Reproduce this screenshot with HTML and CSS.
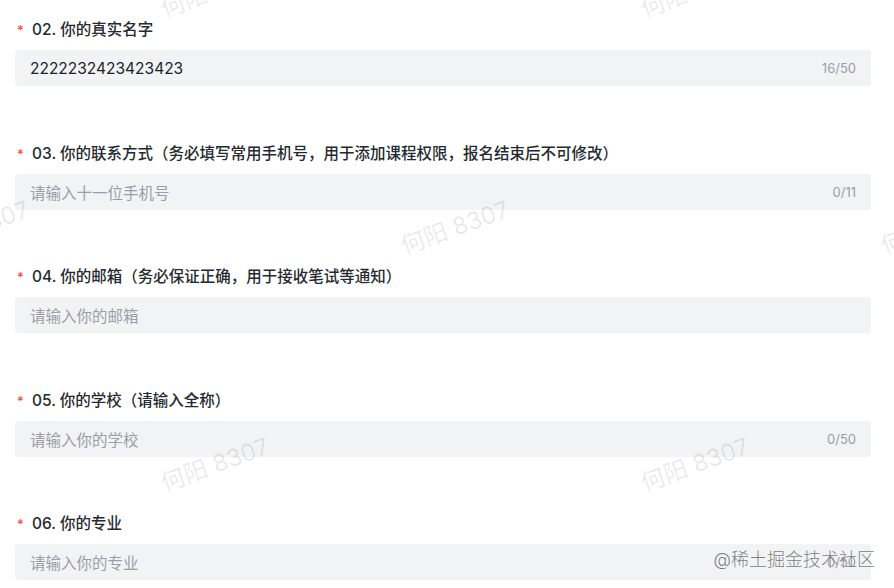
FILE: index.html
```html
<!DOCTYPE html>
<html lang="zh-CN">
<head>
<meta charset="utf-8">
<title>报名表</title>
<link rel="stylesheet" href="styles.css">
</head>
<body>
<div class="page">
  <form class="form">
    <div class="field">
      <div class="label"><span class="req">*</span><span class="label-text">02. 你的真实名字</span></div>
      <div class="input"><span class="value">2222232423423423</span><span class="count">16/50</span></div>
    </div>
    <div class="field">
      <div class="label"><span class="req">*</span><span class="label-text">03. 你的联系方式（务必填写常用手机号，用于添加课程权限，报名结束后不可修改）</span></div>
      <div class="input"><span class="placeholder">请输入十一位手机号</span><span class="count">0/11</span></div>
    </div>
    <div class="field">
      <div class="label"><span class="req">*</span><span class="label-text">04. 你的邮箱（务必保证正确，用于接收笔试等通知）</span></div>
      <div class="input"><span class="placeholder">请输入你的邮箱</span></div>
    </div>
    <div class="field">
      <div class="label"><span class="req">*</span><span class="label-text">05. 你的学校（请输入全称）</span></div>
      <div class="input"><span class="placeholder">请输入你的学校</span><span class="count">0/50</span></div>
    </div>
    <div class="field">
      <div class="label"><span class="req">*</span><span class="label-text">06. 你的专业</span></div>
      <div class="input"><span class="placeholder">请输入你的专业</span><span class="count">0/50</span></div>
    </div>
  </form>

  <div class="watermarks" aria-hidden="true">
    <span class="wm wm-a">何阳 8307</span>
    <span class="wm wm-b">何阳 8307</span>
    <span class="wm wm-c">何阳 8307</span>
    <span class="wm wm-d">何阳 8307</span>
    <span class="wm wm-e">何阳 8307</span>
    <span class="wm wm-f">何阳 8307</span>
    <span class="wm wm-g">何阳 8307</span>
  </div>

  <div class="site-mark">@稀土掘金技术社区</div>
</div>
</body>
</html>
```

FILE: styles.css
```css
* {
  box-sizing: border-box;
}

html, body {
  margin: 0;
  padding: 0;
  background: #ffffff;
}

body {
  font-family: "Inter", "Noto Sans CJK SC", "Noto Sans", sans-serif;
  color: #1f2329;
}

.page {
  position: relative;
  width: 894px;
  height: 588px;
  overflow: hidden;
}

.form {
  display: flex;
  flex-direction: column;
  padding: 19px 23px 0 15px;
  margin: 0;
}

.field {
  display: flex;
  flex-direction: column;
  gap: 9px;
  margin-bottom: 56.5px;
}

.label {
  display: flex;
  align-items: center;
  height: 22px;
  padding-left: 2px;
  font-size: 15.5px;
  font-weight: 500;
  line-height: 22px;
  color: #262a30;
  white-space: nowrap;
}

.req {
  color: #f54a45;
  font-size: 13px;
  width: 15px;
  line-height: 22px;
}

.input {
  display: flex;
  align-items: center;
  justify-content: space-between;
  height: 36px;
  padding: 0 15px;
  background: #f2f3f5;
  border-radius: 3px;
  font-size: 15.5px;
}

.value {
  color: #1f2329;
}

.placeholder {
  color: #9a9ea5;
}

.count {
  color: #9a9ea5;
  font-size: 13px;
}

.watermarks {
  position: absolute;
  inset: 0;
  pointer-events: none;
}

.wm {
  position: absolute;
  width: 160px;
  margin-left: -80px;
  margin-top: -15px;
  text-align: center;
  font-size: 24px;
  line-height: 30px;
  color: rgba(0, 0, 0, 0.09);
  transform: rotate(-20deg);
  white-space: nowrap;
}

.wm-a { left: 215px; top: -9px; }
.wm-b { left: 695px; top: -9px; }
.wm-c { left: -25px; top: 228px; }
.wm-d { left: 455px; top: 228px; }
.wm-e { left: 935px; top: 228px; }
.wm-f { left: 215px; top: 465px; }
.wm-g { left: 695px; top: 465px; }

.site-mark {
  position: absolute;
  right: 19px;
  top: 548px;
  font-size: 18px;
  line-height: 24px;
  color: rgba(100, 100, 100, 0.85);
  font-weight: 300;
  white-space: nowrap;
  text-shadow: 0 0 1px rgba(255, 255, 255, 0.9);
}
```
